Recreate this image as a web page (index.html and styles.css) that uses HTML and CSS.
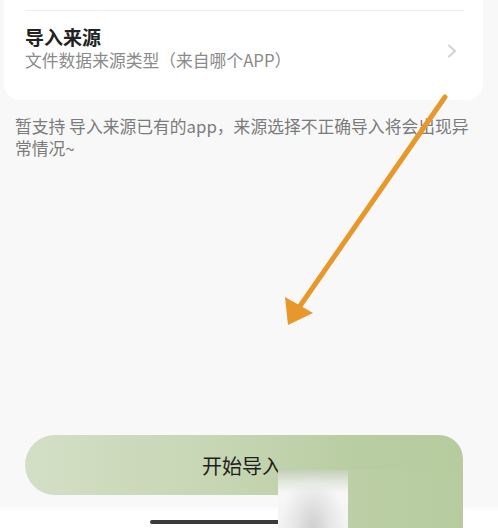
FILE: index.html
```html
<!DOCTYPE html>
<html lang="zh-CN">
<head>
  <meta charset="UTF-8" />
  <meta name="viewport" content="width=device-width, initial-scale=1.0"/>
  <title>导入数据</title>
  <link rel="stylesheet" href="styles.css">
</head>
<body>

  <div class="card">
    <div class="row">
      <div class="row-text">
        <div class="row-title">导入来源</div>
        <div class="row-sub">文件数据来源类型（来自哪个APP）</div>
      </div>
      <svg class="chevron" width="10" height="14" viewBox="0 0 10 14">
        <polyline points="2,1.5 8,7 2,12.5" fill="none" stroke="#d2d2d2" stroke-width="2" stroke-linecap="round" stroke-linejoin="round"/>
      </svg>
    </div>
  </div>

  <p class="note">暂支持 导入来源已有的app，来源选择不正确导入将会出现异常情况~</p>

  <div class="bottom">
    <button class="start-btn">开始导入</button>
    <div class="home-strip">
      <span class="home-bar"></span>
    </div>
  </div>

  <!-- screenshot overlays -->
  <div class="green-tail"></div>
  <div class="blur-patch"></div>

  <svg class="arrow" width="498" height="528" viewBox="0 0 498 528">
    <line x1="445" y1="97" x2="300" y2="306" stroke="#e8972b" stroke-width="5" stroke-linecap="round"/>
    <polygon points="285,297 288,325 313,313" fill="#e8972b"/>
  </svg>

</body>
</html>
```

FILE: styles.css
```css
body {
  margin: 0;
  background: #f8f8f8;
  font-family: "Noto Sans CJK SC", "Noto Sans", sans-serif;
  height: 528px;
  display: flex;
  flex-direction: column;
  overflow: hidden;
  position: relative;
}

.card {
  background: #fff;
  margin: 0 15px 0 4px;
  padding-top: 10px;
  border-radius: 0 0 16px 16px;
}

.row {
  margin: 0 19px 0 21px;
  border-top: 1px solid #efefef;
  height: 89px;
  display: flex;
  align-items: center;
  gap: 10px;
}

.row-text {
  flex: 1;
  margin-top: -16px;
}

.row-title {
  font-size: 19px;
  font-weight: bold;
  color: #222;
  line-height: 24px;
}

.row-sub {
  font-size: 16.8px;
  color: #8a8a8a;
  line-height: 22px;
}

.chevron {
  margin-right: 7px;
  margin-top: -10px;
}

.note {
  margin: 15px 0 0;
  padding: 0 18px 0 15px;
  font-size: 16.8px;
  line-height: 22px;
  color: #7b7b7b;
}

.bottom {
  margin-top: auto;
}

.start-btn {
  display: block;
  width: 438px;
  height: 60px;
  margin: 0 0 0 25px;
  border: none;
  border-radius: 30px 24px 0 30px;
  background: linear-gradient(90deg, #d3dfc5 0%, #c6d6b3 45%, #b9cda2 75%, #b6cb9e 100%);
  font-family: inherit;
  font-size: 20px;
  color: #1f1f1f;
  padding: 0 4px 0 0;
}

.home-strip {
  height: 33px;
  display: flex;
  align-items: flex-end;
  background: linear-gradient(180deg, #f8f8f8 0%, #f8f8f8 30%, #fff 50%);
}

.home-bar {
  display: block;
  width: 132px;
  height: 4px;
  margin: 0 0 4px 150px;
  background: #3a3a3a;
  border-radius: 2px;
}

.green-tail {
  position: absolute;
  left: 348px;
  top: 470px;
  width: 115px;
  height: 58px;
  background: linear-gradient(90deg, #bccfa6, #b6cb9e);
}

.blur-patch {
  position: absolute;
  left: 278px;
  top: 470px;
  width: 70px;
  height: 58px;
  background: radial-gradient(ellipse at 50% 100%, #cfcfcf 0%, #e6e6e6 35%, rgba(245,245,245,0) 65%),
              linear-gradient(180deg, #c4cfb8 0%, #e4e9df 22%, #f7f7f7 40%, #f2f2f2 100%);
}

.arrow {
  position: absolute;
  left: 0;
  top: 0;
  pointer-events: none;
}
```
